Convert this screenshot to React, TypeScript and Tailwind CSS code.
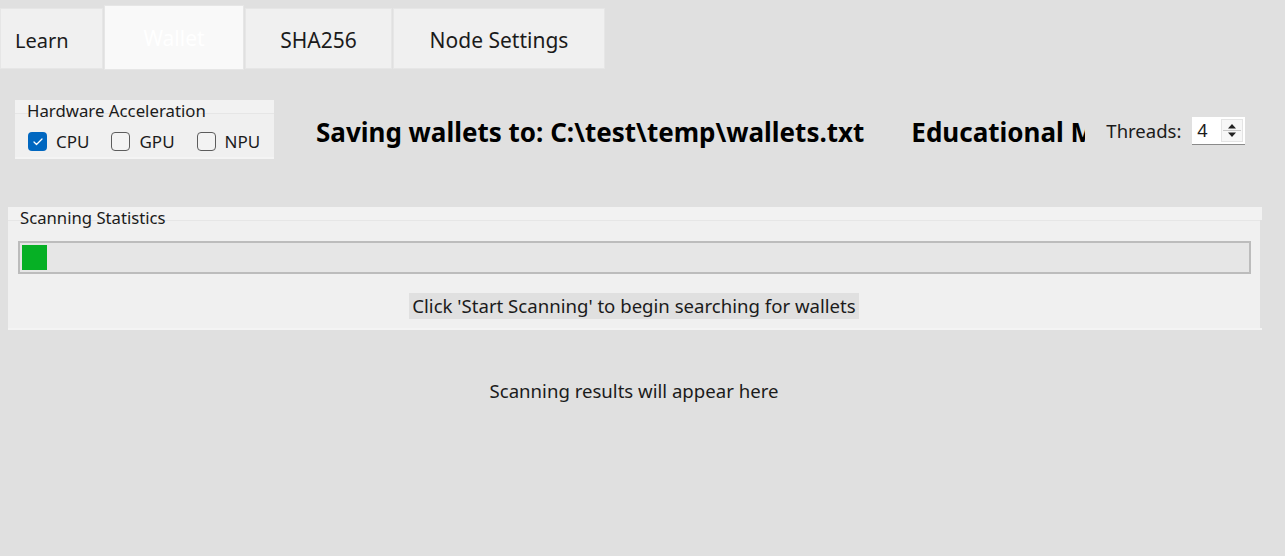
import { Check } from "lucide-react";

const font = { fontFamily: '"Noto Sans", "Open Sans", sans-serif' };

function Box({ checked, label }: { checked?: boolean; label: string }) {
  return (
    <div className="flex items-center gap-[9px]">
      {checked ? (
        <span className="flex h-[19px] w-[19px] items-center justify-center rounded-[4px] bg-[#0067c0]">
          <Check size={12} strokeWidth={2.5} className="text-white" />
        </span>
      ) : (
        <span className="h-[19px] w-[19px] rounded-[4px] border border-[#5c5c5c] bg-[#f3f3f3]" />
      )}
      <span className="text-[17px] leading-[22px] text-[#1b1b1b]">{label}</span>
    </div>
  );
}

export default function App() {
  return (
    <div className="h-[556px] w-[1285px] overflow-hidden bg-[#e0e0e0]" style={font}>
      {/* tabs */}
      <div className="flex items-start gap-[1px] pt-[5px]">
        <div className="mt-[3px] flex h-[61px] w-[103px] items-center border border-[#e6e6e6] bg-[#f0f0f0] pl-[14px] pt-[5px] text-[20px] text-[#1b1b1b]">
          Learn
        </div>
        <div className="flex h-[65px] w-[140px] items-center justify-center border border-[#e6e6e6] bg-[#f9f9f9] pt-[3px] text-[21px] text-white">
          Wallet
        </div>
        <div className="mt-[3px] flex h-[61px] w-[147px] items-center justify-center border border-[#e6e6e6] bg-[#f0f0f0] pt-[5px] text-[21px] text-[#1b1b1b]">
          SHA256
        </div>
        <div className="mt-[3px] flex h-[61px] w-[212px] items-center justify-center border border-[#e6e6e6] bg-[#f0f0f0] pt-[5px] text-[21px] text-[#1b1b1b]">
          Node Settings
        </div>
      </div>

      {/* top row */}
      <div className="mt-[30px] flex items-start">
        <div className="ml-[15px] w-[259px] border-b-2 border-[#f4f4f4]">
          <div className="h-[13px] bg-[#f2f2f2] pl-[12px] text-[16.8px] leading-[22px] text-[#1b1b1b]">
            Hardware Acceleration
          </div>
          <div className="flex h-[44px] items-center gap-[22px] border-t border-[#e6e6e6] bg-[#f0f0f0] pl-[13px] pt-[12px]">
            <Box checked label="CPU" />
            <Box label="GPU" />
            <Box label="NPU" />
          </div>
        </div>
        <div className="ml-[42px] mt-[15px] flex items-center whitespace-nowrap">
          <span className="text-[26px] font-bold leading-[34px] text-black">Saving wallets to: C:\test\temp\wallets.txt</span>
          <div className="ml-[47px] w-[174px] overflow-hidden">
            <span className="text-[26px] font-bold leading-[34px] text-black">Educational Mode</span>
          </div>
        </div>
        <div className="ml-[21px] mt-[17px] flex items-center gap-[11px]">
          <span className="text-[18.5px] leading-[26px] text-[#1b1b1b]">Threads:</span>
          <div className="flex h-[28px] w-[53px] border-b border-[#8a8a8a] bg-white">
            <span className="flex-1 pl-[5px] text-[18px] leading-[26px] text-[#1b1b1b]">4</span>
            <div className="my-[2px] mr-[2px] flex w-[22px] flex-col items-center justify-center gap-[1px] border border-[#e4e4e4] bg-[#f7f7f7]">
              <svg width="10" height="6" viewBox="0 0 10 6"><path d="M1 5.5 L5 1 L9 5.5 Z" fill="#222" /></svg>
              <div className="h-[1px] w-[18px] bg-[#c8c8c8]" />
              <svg width="10" height="6" viewBox="0 0 10 6"><path d="M1 0.5 L5 5 L9 0.5 Z" fill="#222" /></svg>
            </div>
          </div>
        </div>
      </div>

      {/* scanning statistics */}
      <div className="ml-[8px] mt-[48px] w-[1254px] border-b-2 border-[#f4f4f4]">
        <div className="h-[13px] bg-[#f2f2f2] pl-[12px] text-[16.7px] leading-[22px] text-[#1b1b1b]">
          Scanning Statistics
        </div>
        <div className="h-[108px] w-[1252px] border-t border-[#e6e6e6] bg-[#f0f0f0] px-[10px] pt-[20px]">
          <div className="h-[33px] w-[1233px] border-2 border-[#bcbcbc] bg-[#e6e6e6] p-[2px]">
            <div className="h-full w-[25px] bg-[#06b025]" />
          </div>
          <div className="mt-[19px] flex justify-center">
            <span className="bg-[#e0e0e0] px-[3px] text-[18.6px] leading-[26px] text-[#1b1b1b]">
              Click 'Start Scanning' to begin searching for wallets
            </span>
          </div>
        </div>
      </div>

      <div className="mt-[48px] pr-[17px] text-center text-[18.6px] leading-[26px] text-[#1b1b1b]">
        Scanning results will appear here
      </div>
    </div>
  );
}
